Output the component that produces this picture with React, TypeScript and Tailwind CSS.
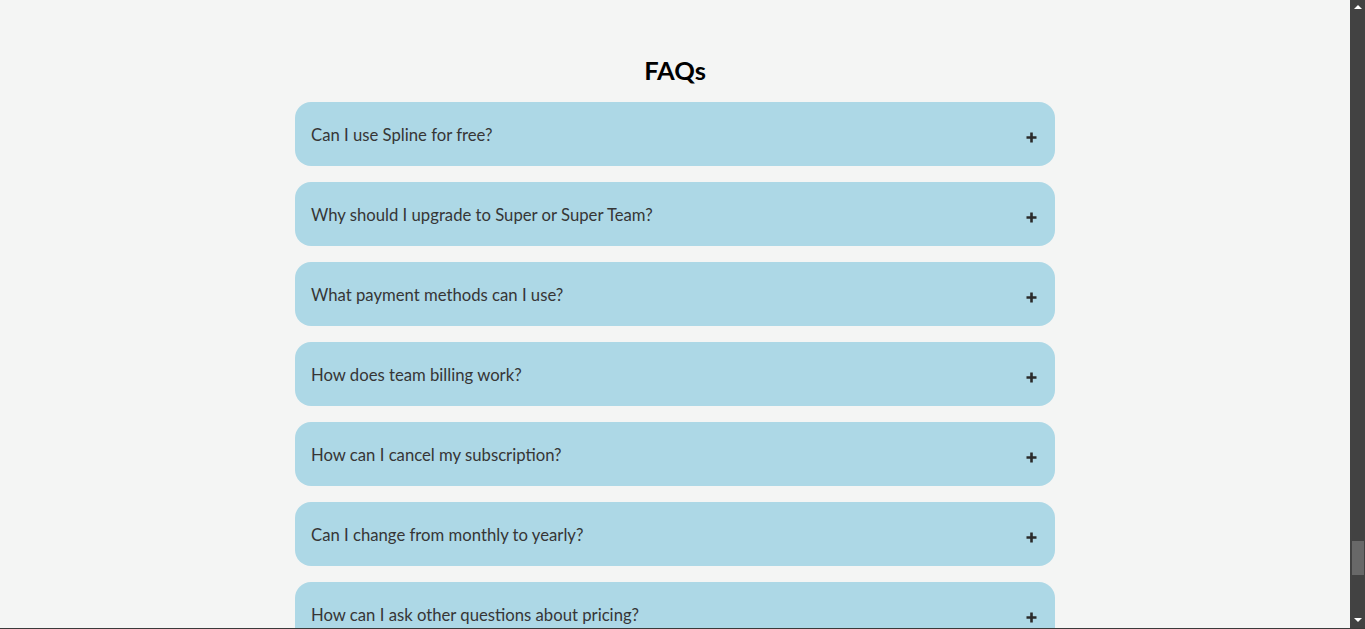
const faqs = [
  "Can I use Spline for free?",
  "Why should I upgrade to Super or Super Team?",
  "What payment methods can I use?",
  "How does team billing work?",
  "How can I cancel my subscription?",
  "Can I change from monthly to yearly?",
  "How can I ask other questions about pricing?",
];

function Plus() {
  return (
    <svg width="11" height="11" viewBox="0 0 11 11" className="shrink-0">
      <path d="M5.5 0.5v10M0.5 5.5h10" stroke="#2b2b2b" strokeWidth="2.6" />
    </svg>
  );
}

function FaqItem({ q }: { q: string }) {
  return (
    <div className="flex h-16 shrink-0 items-center justify-between rounded-2xl bg-[#add8e6] pl-4 pr-[18px]">
      <span className="mt-1 text-[16.7px] text-[#363636]">{q}</span>
      <span className="mt-[6px]">
        <Plus />
      </span>
    </div>
  );
}

export default function App() {
  return (
    <div className="flex h-[629px] flex-col overflow-hidden font-['Lato','Liberation_Sans',sans-serif]">
      <div className="flex h-[628px]">
        <div className="w-[1350px] overflow-hidden bg-[#f4f5f4] pt-[54px]">
          <h2 className="mb-4 text-center text-[25.5px] leading-8 font-bold text-black">FAQs</h2>
          <div className="mx-auto flex w-[760px] flex-col gap-4">
            {faqs.map((q) => (
              <FaqItem key={q} q={q} />
            ))}
          </div>
        </div>
        <div className="flex w-[15px] flex-col items-center bg-[#424242]">
          <div className="mt-[5px] h-0 w-0 border-x-[4px] border-b-[4px] border-x-transparent border-b-white" />
          <div className="mt-[532px] h-[34px] w-[12px] bg-[#686868]" />
          <div className="mt-auto mb-[6px] h-0 w-0 border-x-[4px] border-t-[4px] border-x-transparent border-t-white" />
        </div>
      </div>
      <div className="h-px bg-[#3a3a3a]" />
    </div>
  );
}
